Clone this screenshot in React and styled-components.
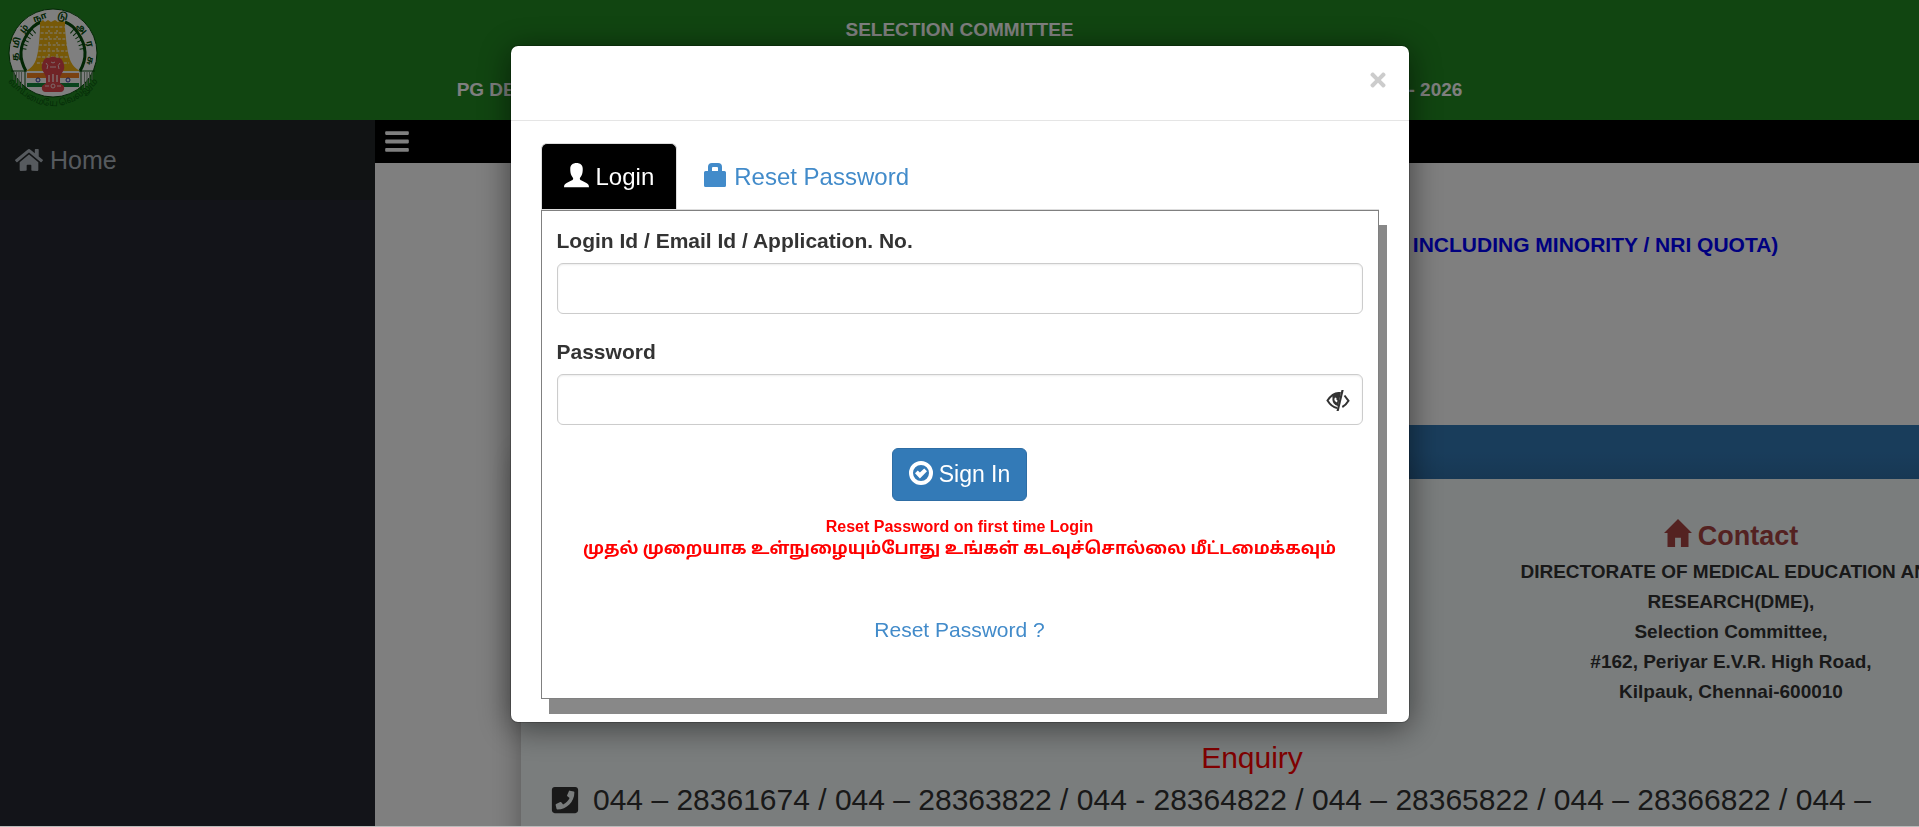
import React, { useState } from "react";
import styled, { createGlobalStyle } from "styled-components";
import { FaBars, FaHome, FaPhoneSquare, FaTimes } from "react-icons/fa";

const GlobalStyle = createGlobalStyle`
  * {
    box-sizing: border-box;
  }
  body {
    margin: 0;
    overflow: hidden;
    background: #fff;
    color: #333;
    font-family: "Liberation Sans", Arial, sans-serif;
    font-size: 21px;
    line-height: 30px;
  }
  h1, h2, h3, p {
    margin: 0;
  }
  a {
    text-decoration: none;
  }
`;

const Page = styled.div`
  display: flex;
  flex-direction: column;
  height: 100vh;
  overflow: hidden;
`;

const Header = styled.header`
  display: flex;
  flex-direction: column;
  align-items: center;
  flex: none;
  gap: 30px;
  height: 120px;
  padding-top: 15px;
  background: #228b22;
  color: #fff;
  h1 {
    font-size: 19px;
    line-height: 30px;
    white-space: nowrap;
  }
`;

const Emblem = styled.svg`
  position: absolute;
  top: 6px;
  left: 6px;
  width: 94px;
  height: 104px;
`;

const Body = styled.div`
  display: flex;
  flex: 1;
  min-height: 0;
`;

const Sidebar = styled.nav`
  flex: none;
  width: 375px;
  background: #262833;
`;

const SideLink = styled.a`
  display: flex;
  align-items: center;
  gap: 7px;
  height: 80px;
  padding: 0 15px;
  background: #222628;
  color: #adb5bd;
  font-size: 25px;
`;

const Main = styled.main`
  flex: 1;
  min-width: 0;
  overflow: hidden;
`;

const TopBar = styled.div`
  display: flex;
  align-items: center;
  height: 43px;
  padding: 0 10px;
  background: #000;
`;

const MenuButton = styled.button`
  display: flex;
  padding: 0;
  border: 0;
  background: none;
  color: #fff;
  font-size: 27px;
  svg {
    width: 24px;
  }
`;

const Content = styled.div`
  width: calc(100% - 82px);
  margin-left: 146px;
`;

const Notice = styled.h2`
  padding: 67px 0 165px;
  color: #00f;
  font-size: 21px;
  line-height: 30px;
  text-align: center;
  white-space: nowrap;
`;

const Panel = styled.section`
  height: 600px;
  background: #f5fbfb;
  box-shadow: 0 30px 28px rgba(0, 0, 0, 0.35);
`;

const PanelHead = styled.div`
  height: 54px;
  background: linear-gradient(#337ab7 50%, #2f70a8);
`;

const Columns = styled.div`
  display: grid;
  grid-template-columns: repeat(3, 1fr);
  height: 258px;
  padding: 38px 10px 0 0;
`;

const Contact = styled.address`
  grid-column: 3;
  padding: 0 20px;
  color: #333;
  font-size: 19px;
  font-style: normal;
  font-weight: bold;
  line-height: 30px;
  text-align: center;
  h3 {
    display: flex;
    align-items: flex-end;
    justify-content: center;
    gap: 6px;
    height: 34px;
    margin-bottom: 6px;
    color: #a94442;
    font-size: 27px;
  }
  svg {
    margin-bottom: 4px;
  }
`;

const Enquiry = styled.div`
  padding: 0 29px;
  font-size: 30px;
  line-height: 42px;
  h3 {
    color: #f00;
    font-size: 30px;
    font-weight: normal;
    text-align: center;
  }
  p {
    display: flex;
    align-items: center;
    gap: 13px;
    white-space: nowrap;
  }
`;

const Backdrop = styled.div`
  position: fixed;
  inset: 0;
  display: flex;
  align-items: flex-start;
  justify-content: center;
  padding-top: 45px;
  border-bottom: 1px solid #bbb;
  background: rgba(0, 0, 0, 0.5);
`;

const Dialog = styled.div`
  width: 900px;
  border: 1px solid rgba(0, 0, 0, 0.2);
  border-radius: 8px;
  background: #fff;
  background-clip: padding-box;
  box-shadow: 0 5px 32px rgba(0, 0, 0, 0.5);
`;

const DialogHeader = styled.div`
  display: flex;
  align-items: flex-start;
  justify-content: flex-end;
  height: 75px;
  padding: 21px 18px 0;
  border-bottom: 1px solid #e5e5e5;
`;

const CloseButton = styled.button`
  display: flex;
  padding: 2px;
  border: 0;
  background: none;
  color: #ccc;
  font-size: 22px;
  cursor: pointer;
`;

const DialogBody = styled.div`
  padding: 22px 30px 23px;
`;

const Tabs = styled.div`
  display: flex;
  gap: 3px;
  border-bottom: 1px solid #ddd;
`;

const Tab = styled.button`
  display: flex;
  align-items: center;
  gap: 7px;
  height: 66px;
  padding: 0 22px;
  border: 1px solid ${(props) => (props.$active ? "#ddd" : "transparent")};
  border-bottom: 0;
  border-radius: 6px 6px 0 0;
  background: ${(props) => (props.$active ? "#000" : "transparent")};
  color: ${(props) => (props.$active ? "#fff" : "#428bca")};
  font-family: inherit;
  font-size: 24px;
  cursor: pointer;
  svg {
    margin-bottom: 3px;
  }
`;

const Form = styled.form`
  display: flex;
  flex-direction: column;
  height: 489px;
  padding: 15px;
  border: 1px solid #808080;
  box-shadow: 8px 15px #888;
`;

const Field = styled.div`
  display: flex;
  flex-direction: column;
  gap: 7px;
  margin-bottom: 23px;
  label {
    font-weight: bold;
  }
`;

const InputBox = styled.div`
  display: flex;
  align-items: center;
  height: 51px;
  padding-right: 12px;
  border: 1px solid #ccc;
  border-radius: 6px;
  box-shadow: inset 0 1px 2px rgba(0, 0, 0, 0.08);
`;

const Input = styled.input`
  flex: 1;
  height: 100%;
  padding: 0 18px;
  border: 0;
  outline: none;
  background: none;
  color: #555;
  font-family: inherit;
  font-size: 21px;
`;

const IconButton = styled.button`
  display: flex;
  padding: 3px 0 0;
  border: 0;
  background: none;
  color: #333;
  cursor: pointer;
`;

const SignIn = styled.button`
  display: flex;
  align-items: center;
  align-self: center;
  gap: 6px;
  height: 53px;
  padding: 0 16px;
  border: 1px solid #2e6da4;
  border-radius: 6px;
  background: #337ab7;
  color: #fff;
  font-family: inherit;
  font-size: 23px;
  cursor: pointer;
  svg {
    margin-bottom: 3px;
  }
`;

const Hint = styled.p`
  margin-top: 14px;
  color: #f00;
  font-size: 16px;
  font-weight: bold;
  line-height: 23px;
  text-align: center;
`;

const TamilHint = styled(Hint)`
  margin-top: 0;
  font-family: "Noto Sans Tamil", "Lohit Tamil", "Liberation Sans", sans-serif;
  font-size: 17px;
`;

const ResetLink = styled.a`
  align-self: center;
  margin-top: 54px;
  color: #428bca;
`;

const Glyph = ({ size = 24, children }) => (
  <svg
    width={size}
    height={size}
    viewBox="0 0 24 24"
    fill="currentColor"
    aria-hidden="true"
  >
    {children}
  </svg>
);

const UserGlyph = () => (
  <Glyph size={25}>
    <path d="M12 0C8.500 0 6 2 6 5.600c0 2.800.2 4.800 1.300 6.600.9 1.500 1.500 1.900 1.500 2.900 0 .9-.6 1.300-1.700 1.800L2.500 19.100C1 19.900.1 20.600 0 23.200h24c-.1-2.600-1-3.300-2.500-4.100l-4.600-2.200c-1.100-.5-1.700-.9-1.700-1.800 0-1 .6-1.400 1.500-2.900C17.800 10.400 18 8.400 18 5.600 18 2 15.500 0 12 0z" />
  </Glyph>
);

const LockGlyph = () => (
  <Glyph>
    <path
      fillRule="evenodd"
      d="M5 8V4q0-4 4-4h6q4 0 4 4v4h2.500q1.500 0 1.500 1.500v13q0 1.500-1.500 1.500h-19Q1 24 1 22.500v-13Q1 8 2.500 8zM9 8h6V5q0-1-1-1h-4q-1 0-1 1z"
    />
  </Glyph>
);

const HomeGlyph = () => (
  <Glyph size={28}>
    <path d="M12 0 0 12h3v12h6.500v-8h5v8H21V12h3z" />
  </Glyph>
);

const OkGlyph = () => (
  <Glyph>
    <circle
      cx="12"
      cy="12"
      r="10"
      fill="none"
      stroke="currentColor"
      strokeWidth="4"
    />
    <path d="m6 12.300 2.800-2.800 2.100 2.100 4.300-4.200 2.800 2.800-7.100 7.200z" />
  </Glyph>
);

const EyeCloseGlyph = () => (
  <Glyph>
    <path
      fill="none"
      stroke="currentColor"
      strokeWidth="2"
      d="M14 4Q7 3 1.500 11.500 5.500 18 11 19M18.500 6.500l4 5.300Q20 16 16.300 18"
    />
    <path
      fillRule="evenodd"
      d="M6 5.500 15 3l-3 14C8 16 6 13 6.500 9zM9 8.500q-2 3 2 5l.5-2q-1.800-.8-1-2.500z"
    />
    <path d="M15.500 1h2.200l-5 21h-2.200z" />
  </Glyph>
);

// letters of the ring with their angle from the top
const LETTERS = [
  ["த", -96],
  ["மி", -74],
  ["ழ்", -50],
  ["நா", -20],
  ["டு", 15],
  ["அ", 50],
  ["ர", 76],
  ["சு", 102],
];

const TOWER_ROWS = [21, 27, 33, 39, 45, 51, 57];
const FEATHERS = [-80, -72, -64, -56, -48, -40, 40, 48, 56, 64, 72, 80];

const StateEmblem = () => (
  <Emblem viewBox="0 0 94 104" role="img" aria-label="Tamil Nadu">
    <circle cx="47" cy="47" r="44" fill="#fff" stroke="#064d0b" />
    <g stroke="#064d0b" fill="none">
      <path d="M20 65Q9 46 22 27 27 19 35 16" strokeWidth="3" />
      <path d="M74 65Q85 46 72 27 67 19 59 16" strokeWidth="3" />
      {FEATHERS.map((a) => (
        <path key={a} d="M47 15v6" transform={`rotate(${a} 47 48)`} />
      ))}
      <path d="M5 65h16M73 65h16M19 65v19M75 65v19" />
      <path
        d="M8 66v8M10.500 66v11M13 66v14M15.500 66v16M78.500 66v16M81 66v14M83.500 66v11M86 66v8"
        stroke="#8b9b8b"
      />
    </g>
    <path
      d="M34 22v-6l3-2 2 2 3-2 3 2 4-2 3 2 3-2 4 2v6q2 26 6 34 3 6 9 9H20q6-3 9-9 4-8 5-34z"
      fill="#eeb211"
    />
    <g stroke="#fff" strokeWidth="1" strokeDasharray="3 1.500">
      {TOWER_ROWS.map((y) => (
        <path key={y} d={`M${38 - y / 8} ${y}H${56 + y / 8}`} />
      ))}
      <path d="M43 24v40M51 24v40" strokeDasharray="2 4" />
    </g>
    <path fill="#f58220" d="M21 67h52v5H21z" />
    <path fill="#12873a" d="M21 77h52v4H21z" />
    <circle cx="32" cy="74" r="2" fill="none" stroke="#35359b" />
    <circle cx="62" cy="74" r="2" fill="none" stroke="#35359b" />
    <path
      d="M37 56q2-5 6-4 4-3 8 0 4-1 6 4 3 6-1 11l-2 4v6l4 3q1 6-4 6H40q-5 0-4-6l4-3v-6l-2-4q-4-5-1-11z"
      fill="#e0464c"
    />
    <g stroke="#fbd5d5" fill="none">
      <path d="M43 69v7M47 68v8M51 69v7" strokeWidth="1.500" />
      <path d="M40 57q3 2 1 6M54 57q-3 2-1 6M45 56q2 2 4 0M44 61h6" />
      <circle cx="47" cy="80" r="2" />
      <path d="M39 80h4M51 80h4" />
    </g>
    <g
      fill="#064d0b"
      fontSize="9"
      fontWeight="bold"
      textAnchor="middle"
      fontFamily="'Noto Sans Tamil', 'Lohit Tamil', sans-serif"
    >
      {LETTERS.map(([letter, angle]) => (
        <text key={letter} x="47" y="12" transform={`rotate(${angle} 47 47)`}>
          {letter}
        </text>
      ))}
    </g>
    <path id="mottoArc" d="M4 78Q47 122 90 78" fill="none" />
    <text
      fill="#0a5a10"
      fontSize="9"
      textAnchor="middle"
      fontFamily="'Noto Sans Tamil', 'Lohit Tamil', sans-serif"
    >
      <textPath href="#mottoArc" startOffset="50%">
        வாய்மையே வெல்லும்
      </textPath>
    </text>
  </Emblem>
);

const ADDRESS = [
  "DIRECTORATE OF MEDICAL EDUCATION AND RESEARCH(DME),",
  "Selection Committee,",
  "#162, Periyar E.V.R. High Road,",
  "Kilpauk, Chennai-600010",
];

const Portal = () => (
  <Page>
    <Header>
      <StateEmblem />
      <h1>SELECTION COMMITTEE</h1>
      <h1>
        PG DEGREE / DIPLOMA / DNB / MDS COURSES ONLINE APPLICATION PORTAL FOR
        THE SESSION 2025 - 2026
      </h1>
    </Header>
    <Body>
      <Sidebar>
        <SideLink href="#home">
          <FaHome size={28} /> Home
        </SideLink>
      </Sidebar>
      <Main>
        <TopBar>
          <MenuButton aria-label="Toggle menu">
            <FaBars />
          </MenuButton>
        </TopBar>
        <Content>
          <Notice>
            PG DEGREE COURSES (GOVERNMENT AND MANAGEMENT SEATS INCLUDING
            MINORITY / NRI QUOTA)
          </Notice>
          <Panel>
            <PanelHead />
            <Columns>
              <Contact>
                <h3>
                  <HomeGlyph /> Contact
                </h3>
                {ADDRESS.map((line) => (
                  <div key={line}>{line}</div>
                ))}
              </Contact>
            </Columns>
            <Enquiry>
              <h3>Enquiry</h3>
              <p>
                <FaPhoneSquare />
                044 – 28361674 / 044 – 28363822 / 044 - 28364822 / 044 –
                28365822 / 044 – 28366822 / 044 –
              </p>
            </Enquiry>
          </Panel>
        </Content>
      </Main>
    </Body>
  </Page>
);

const LoginDialog = () => {
  const [tab, setTab] = useState("login");
  const [visible, setVisible] = useState(false);

  return (
    <Backdrop>
      <Dialog role="dialog" aria-label="Login">
        <DialogHeader>
          <CloseButton aria-label="Close">
            <FaTimes />
          </CloseButton>
        </DialogHeader>
        <DialogBody>
          <Tabs role="tablist">
            <Tab
              role="tab"
              $active={tab === "login"}
              onClick={() => setTab("login")}
            >
              <UserGlyph /> Login
            </Tab>
            <Tab
              role="tab"
              $active={tab === "reset"}
              onClick={() => setTab("reset")}
            >
              <LockGlyph /> Reset Password
            </Tab>
          </Tabs>
          <Form onSubmit={(e) => e.preventDefault()}>
            <Field>
              <label htmlFor="loginId">
                Login Id / Email Id / Application. No.
              </label>
              <InputBox>
                <Input id="loginId" type="text" />
              </InputBox>
            </Field>
            <Field>
              <label htmlFor="password">Password</label>
              <InputBox>
                <Input id="password" type={visible ? "text" : "password"} />
                <IconButton
                  type="button"
                  aria-label="Show password"
                  onClick={() => setVisible(!visible)}
                >
                  <EyeCloseGlyph />
                </IconButton>
              </InputBox>
            </Field>
            <SignIn type="submit">
              <OkGlyph /> Sign In
            </SignIn>
            <Hint>Reset Password on first time Login</Hint>
            <TamilHint lang="ta">
              முதல் முறையாக உள்நுழையும்போது உங்கள் கடவுச்சொல்லை மீட்டமைக்கவும்
            </TamilHint>
            <ResetLink href="#reset">Reset Password ?</ResetLink>
          </Form>
        </DialogBody>
      </Dialog>
    </Backdrop>
  );
};

const App = () => (
  <>
    <GlobalStyle />
    <Portal />
    <LoginDialog />
  </>
);

export default App;
